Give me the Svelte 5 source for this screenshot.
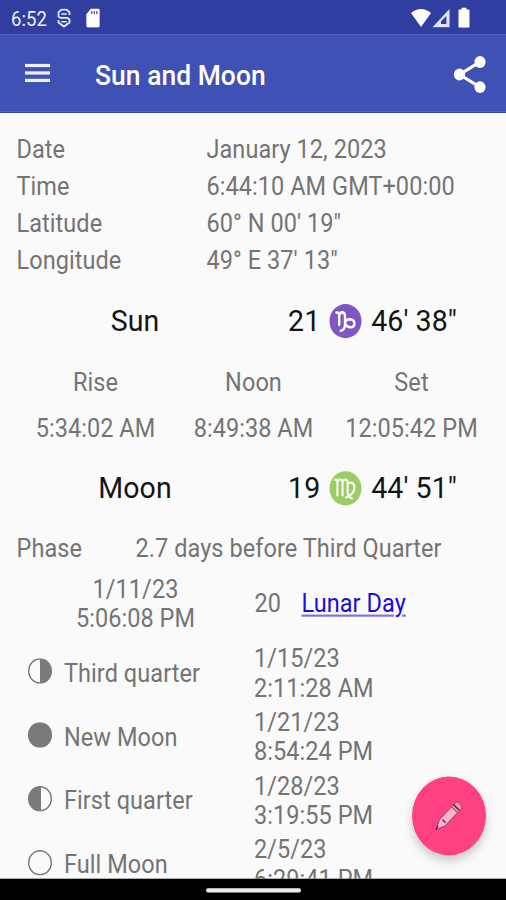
<script lang="ts">
  type Phase = {
    name: string;
    icon: 'third' | 'new' | 'first' | 'full';
    date: string;
    time: string;
  };

  const info = [
    ['Date', 'January 12, 2023'],
    ['Time', '6:44:10 AM GMT+00:00'],
    ['Latitude', '60° N 00\' 19"'],
    ['Longitude', '49° E 37\' 13"'],
  ];

  const sunTimes = [
    ['Rise', '5:34:02 AM'],
    ['Noon', '8:49:38 AM'],
    ['Set', '12:05:42 PM'],
  ];

  const phases: Phase[] = [
    { name: 'Third quarter', icon: 'third', date: '1/15/23', time: '2:11:28 AM' },
    { name: 'New Moon', icon: 'new', date: '1/21/23', time: '8:54:24 PM' },
    { name: 'First quarter', icon: 'first', date: '1/28/23', time: '3:19:55 PM' },
    { name: 'Full Moon', icon: 'full', date: '2/5/23', time: '6:29:41 PM' },
  ];
</script>

<div class="screen">
  <header>
    <div class="status-bar">
      <span class="clock">6:52</span>
      <svg class="status-s" width="14" height="18" viewBox="0 0 14 18" fill="none" stroke="#e8eaff" stroke-width="1.8">
        <path d="M12.500 6V3.500L9.500 1H4.500L1.500 3.500v4L3.500 8.800h7l2 1.400v3L7 17l-5.500-3.800v-2.500" />
        <path d="M4.300 5.200h5.400M4.300 12.400h5.400" stroke-width="1.500" />
      </svg>
      <svg class="status-sd" width="14" height="18" viewBox="0 0 15 18" preserveAspectRatio="none">
        <path d="M5.4 0H13q1.6 0 1.6 1.6v14.6q0 1.6-1.6 1.6H2q-1.6 0-1.6-1.6V5.3z" fill="#fff" />
        <path d="M6.2 2.4v3M8.9 2.4v3M11.6 2.4v3" stroke="#303f9f" stroke-width="1.2" />
      </svg>
      <span class="spacer"></span>
      <svg width="20" height="18" viewBox="0 0 20 18" fill="#fff">
        <path d="M0 4.2Q10-3.2 20 4.2L10 17.4z" />
      </svg>
      <svg class="signal" width="18" height="18" viewBox="0 0 18 18">
        <path d="M17.5.5v17H.5z" fill="#dfe3ff" />
        <path d="M14.4 7v7.5H9V12z" fill="#303f9f" />
      </svg>
      <svg class="battery" width="12" height="19" viewBox="0 0 12 19" fill="#fff">
        <path d="M3.5 0h5v2H10.500q1 0 1 1v15q0 1-1 1h-9q-1 0-1-1V3q0-1 1-1h2z" />
      </svg>
    </div>
    <div class="app-bar">
      <button class="menu" aria-label="Menu">
        <span></span>
        <span></span>
        <span></span>
      </button>
      <h1>Sun and Moon</h1>
      <button class="share" aria-label="Share">
        <svg width="34" height="36" viewBox="0 0 34 36">
          <path d="M27 6.200 6.500 18 27 29.800" fill="none" stroke="#fff" stroke-width="3" />
          <circle cx="27" cy="6.200" r="5.600" fill="#fff" />
          <circle cx="6.500" cy="18" r="5.600" fill="#fff" />
          <circle cx="27" cy="29.800" r="5.600" fill="#fff" />
        </svg>
      </button>
    </div>
  </header>

  <main>
    <dl class="info">
      {#each info as [label, value]}
        <dt>{label}</dt>
        <dd>{value}</dd>
      {/each}
    </dl>

    <div class="body-row">
      <h2>Sun</h2>
      <p>
        21
        <svg width="33" height="33" viewBox="0 0 33 33" role="img" aria-label="Capricorn">
          <circle cx="16.500" cy="16.500" r="16" fill="#7e57c2" />
          <path
            d="M7.500 8.500q2.500-.6 2.700 2.500v9M10.200 11.500q.8-3.400 3.300-3.200 2.500.2 2.500 3.600v7.200q.2 5.600-4.200 6.400M16 18q1-3.300 4.900-3.300 4.500.3 4.500 4 0 3.600-4 3.600-3.600-.1-5.400-3.400"
            fill="none" stroke="#fff" stroke-width="2.400" stroke-linecap="round"
          />
        </svg>
        46' 38"
      </p>
    </div>

    <div class="sun-times">
      {#each sunTimes as [label, time]}
        <div>
          <span>{label}</span>
          <span>{time}</span>
        </div>
      {/each}
    </div>

    <div class="body-row">
      <h2>Moon</h2>
      <p>
        19
        <svg width="33" height="33" viewBox="0 0 33 33" role="img" aria-label="Virgo">
          <circle cx="16.500" cy="16.500" r="16" fill="#9ccc65" />
          <path
            d="M6.200 8.300q2.200-.2 2.200 2.500v12.400M8.400 11q.8-2.800 2.900-2.800t2.200 2.800v12.200M13.500 11q.8-2.800 2.900-2.800t2.200 2.800v9.600q.2 3.800 4.400 5.400M18.600 13q1.200-2.200 3.500-1.900 3.300.5 3.300 4.700 0 6.200-8.400 9.400"
            fill="none" stroke="#fff" stroke-width="2" stroke-linecap="round"
          />
        </svg>
        44' 51"
      </p>
    </div>

    <div class="phase">
      <span>Phase</span>
      <span>2.7 days before Third Quarter</span>
    </div>

    <div class="lunar-day">
      <p>1/11/23<br />5:06:08 PM</p>
      <span>20</span>
      <a href="#lunar-day">Lunar Day</a>
    </div>

    <ul class="phases">
      {#each phases as phase}
        <li>
          <svg width="24" height="24" viewBox="0 0 24 24" fill="#7b7b7b">
            <circle cx="12" cy="12" r="11.300" fill={phase.icon === 'new' ? '#7b7b7b' : 'none'} stroke="#757575" stroke-width="1.400" />
            {#if phase.icon === 'third'}
              <path d="M12 .7a11.300 11.300 0 0 1 0 22.600z" />
            {:else if phase.icon === 'first'}
              <path d="M13 .7h-1a11.300 11.300 0 0 0 0 22.600h1z" />
            {/if}
          </svg>
          <span class="name">{phase.name}</span>
          <span>{phase.date}<br />{phase.time}</span>
        </li>
      {/each}
    </ul>

    <button class="fab" aria-label="Edit">
      <svg width="28" height="28" viewBox="0 0 28 28" stroke="#8a3a5c" stroke-width=".9" stroke-linejoin="round">
        <path d="M1 27 4.500 17.500 16.500 5.500 22.500 11 10 23.500z" fill="#f9b4cf" />
        <path d="m16.500 5.500 4-4q1.500-1.300 3 0l3 3q1.300 1.500 0 3l-4 3.500z" fill="#f48fb1" />
        <path d="m18.500 3.500 6 5.500M7.500 17.500l3 3M1 27l2-3.500" fill="none" stroke="#5d2940" stroke-width="1.400" />
      </svg>
    </button>
  </main>

  <div class="nav-bar"><span></span></div>
</div>

<style>
  :global(body) {
    height: 900px;
    background: #000;
  }

  .screen {
    display: flex;
    flex-direction: column;
    width: 506px;
    height: 845px;
    overflow: hidden;
    transform: scaleY(calc(900 / 845));
    transform-origin: 0 0;
    background: #fafafa;
    color: #747474;
    font-family: Roboto, sans-serif;
    font-size: 23.500px;
    line-height: 27px;
    letter-spacing: 0.060px;
  }

  h1,
  h2,
  p,
  dl,
  dd,
  ul {
    margin: 0;
    padding: 0;
    font-weight: 400;
  }

  button {
    padding: 0;
    border: none;
    background: none;
  }

  svg {
    display: block;
    flex: none;
  }

  header {
    flex: none;
    color: #fff;
    border-bottom: 1px solid #1f389d;
  }

  .status-bar {
    display: flex;
    align-items: center;
    height: 32px;
    padding: 1px 36px 0 11px;
    box-sizing: border-box;
    background: #303f9f;
  }

  .clock {
    width: 47px;
    padding-top: 3px;
    font-size: 18.500px;
    color: #eceeff;
  }

  .status-s {
    margin-left: -1px;
  }

  .status-sd {
    margin-left: 15px;
  }

  .spacer {
    flex: 1;
  }

  .signal {
    margin: 0 8px 0 1px;
  }

  .app-bar {
    display: flex;
    align-items: center;
    height: 73px;
    padding: 2px 19px 0 25px;
    box-sizing: border-box;
    background: #3f51b5;
  }

  .menu {
    display: flex;
    flex-direction: column;
    gap: 4px;
    width: 25px;
    margin-top: -2px;
  }

  .menu span {
    height: 3px;
    background: #eef0ff;
  }

  h1 {
    flex: 1;
    margin-left: 45px;
    padding-top: 3px;
    font-size: 26.400px;
    font-weight: 500;
  }

  main {
    position: relative;
    flex: 1;
    min-height: 0;
    padding: 17px 15.500px 0 16.500px;
    overflow: hidden;
  }

  .info {
    display: grid;
    grid-template-columns: 190px 1fr;
    row-gap: 8px;
    padding-top: 4px;
  }

  .body-row {
    display: grid;
    grid-template-columns: 1fr 1fr;
    align-items: center;
    height: 34px;
    margin-top: 26px;
    color: #141414;
    font-size: 28.500px;
    line-height: 34px;
    text-align: center;
  }

  h2 {
    font-size: 28.500px;
  }

  .body-row p {
    display: flex;
    align-items: center;
    justify-content: center;
    gap: 9px;
    padding-left: 1px;
  }

  .body-row svg {
    margin-top: -1px;
  }

  .sun-times {
    display: grid;
    grid-template-columns: repeat(3, 1fr);
    margin-top: 27px;
    text-align: center;
  }

  .sun-times div {
    display: flex;
    flex-direction: column;
    gap: 16px;
  }

  .phase {
    display: flex;
    margin-top: 26px;
  }

  .phase span:first-child {
    width: 119px;
  }

  .lunar-day {
    display: flex;
    align-items: center;
    margin-top: 10px;
    line-height: 28px;
  }

  .lunar-day p {
    width: 238px;
    text-align: center;
  }

  .lunar-day span {
    width: 47px;
  }

  .lunar-day a {
    color: #1a0be0;
    text-decoration-color: #7a72e8;
    text-decoration-thickness: 2px;
    text-underline-offset: 2px;
  }

  .phases {
    margin-top: 9px;
    list-style: none;
  }

  .phases li {
    display: flex;
    align-items: center;
    height: 56px;
    margin-bottom: 4.150px;
    padding-left: 11.500px;
    line-height: 28px;
  }

  .phases svg {
    margin-top: -5px;
  }

  .name {
    width: 190px;
    margin-left: 12px;
  }

  .fab {
    position: absolute;
    right: 20px;
    bottom: 22px;
    display: flex;
    align-items: center;
    justify-content: center;
    width: 74px;
    height: 74px;
    border-radius: 50%;
    background: #ff4081;
    box-shadow:
      0 6px 9px rgba(0, 0, 0, 0.16),
      0 1px 8px rgba(0, 0, 0, 0.06);
  }

  .nav-bar {
    display: flex;
    align-items: center;
    justify-content: center;
    flex: none;
    height: 20px;
    padding-top: 2px;
    box-sizing: border-box;
    background: #000;
  }

  .nav-bar span {
    width: 95px;
    height: 3.500px;
    border-radius: 2px;
    background: #eee;
  }
</style>
